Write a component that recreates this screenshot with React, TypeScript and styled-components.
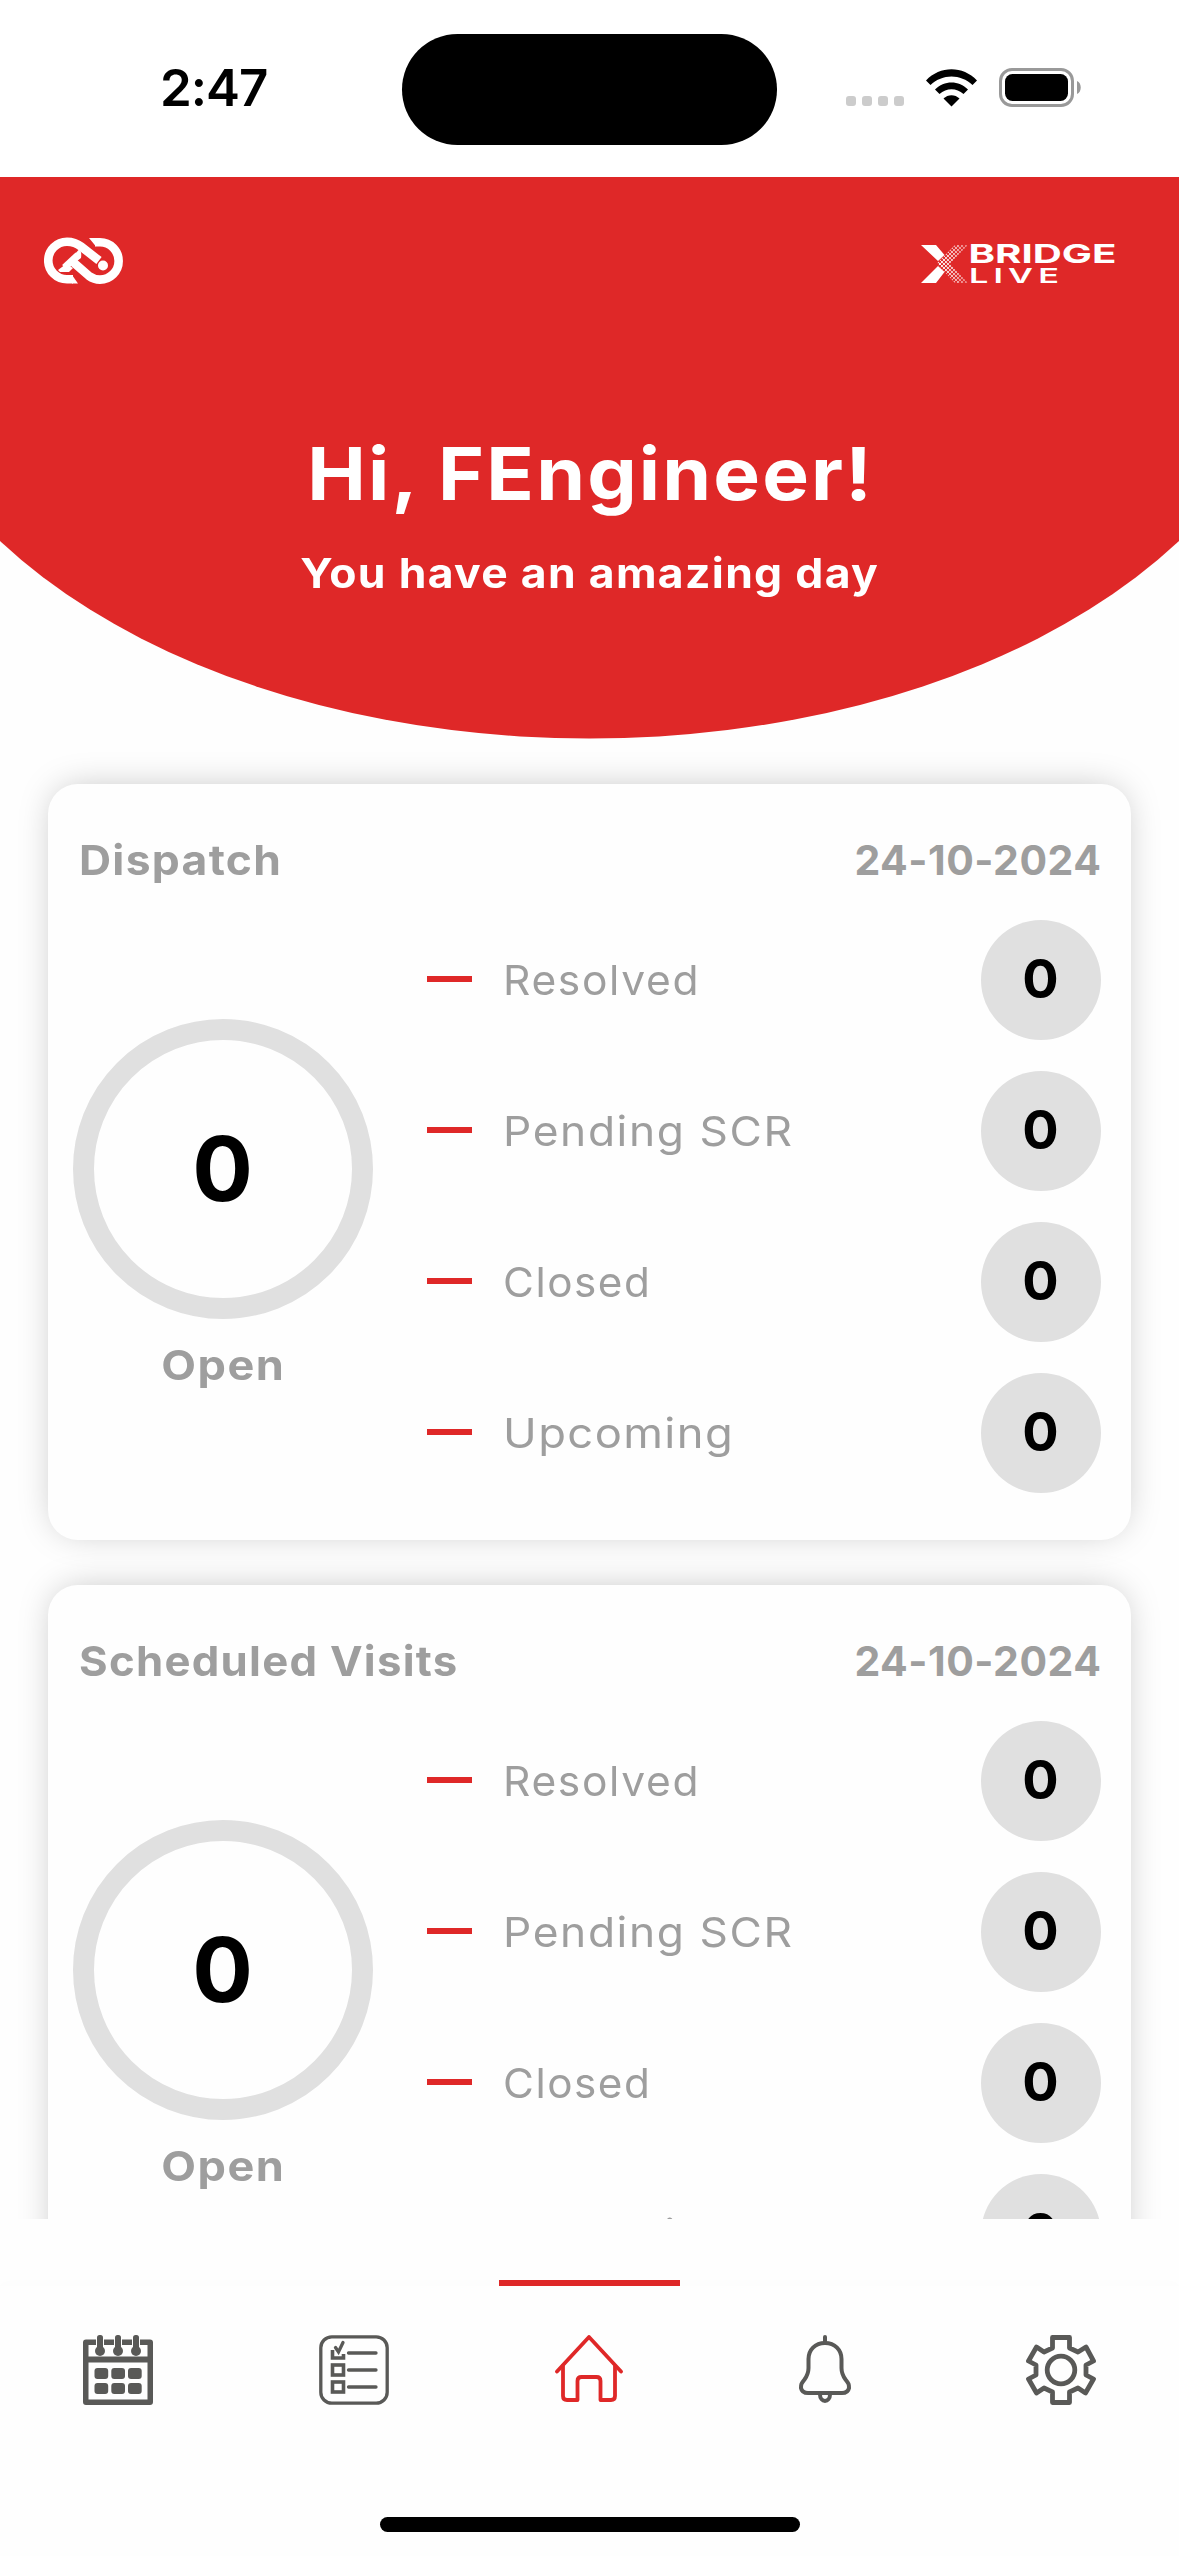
import React from 'react';
import styled, { createGlobalStyle } from 'styled-components';

const RED = '#df2828';
const GREY = '#9e9e9e';
const SILVER = '#e0e0e0';
const ICON = '#595957';

const GlobalStyle = createGlobalStyle`
  html, body { margin: 0; padding: 0; background: #fefefe; }
  body { width: 1179px; height: 2556px; overflow: hidden; }
  * { box-sizing: border-box; }
`;

const Screen = styled.div`
  width: 1179px;
  height: 2556px;
  overflow: hidden;
  display: flex;
  flex-direction: column;
  background: #fefefe;
  font-family: Inter, 'Open Sans', sans-serif;
`;

const StatusBar = styled.div`
  height: 177px;
  flex: none;
  display: flex;
  align-items: flex-start;
  background: #fff;
`;

const Clock = styled.div`
  width: 402px;
  padding: 57px 0 0 160px;
  font-size: 51px;
  line-height: 62px;
  font-weight: 600;
  letter-spacing: -1px;
  color: #000;
`;

const Island = styled.div`
  width: 375px;
  height: 111px;
  margin-top: 33.5px;
  border-radius: 56px;
  background: #000;
`;

const StatusIcons = styled.div`
  display: flex;
  align-items: flex-end;
  margin: 68px 0 0 69px;
  height: 39px;
`;

const Header = styled.header`
  height: 562px;
  flex: none;
  overflow: hidden;
  display: flex;
  flex-direction: column;
  align-items: center;
  background: ${RED};
  clip-path: ellipse(707px 441px at 50% 120.5px);
  color: #fff;
`;

const Logos = styled.div`
  width: 100%;
  height: 130px;
  flex: none;
  display: flex;
  justify-content: space-between;
  align-items: flex-start;
  padding: 60px 62px 0 44px;
`;

const Greeting = styled.h1`
  margin: 123px 0 0;
  font-size: 73px;
  line-height: 88px;
  font-weight: 700;
  letter-spacing: 2px;
  margin-right: -2px;
  transform: scaleX(1.075);
`;

const Subtitle = styled.p`
  margin: 30px 0 0;
  font-size: 41px;
  line-height: 50px;
  font-weight: 650;
  letter-spacing: 1.2px;
  transform: scaleX(1.085);
`;

const Feed = styled.main`
  height: 1480px;
  flex: none;
  overflow: hidden;
  display: flex;
  flex-direction: column;
  gap: 45px;
  padding: 45px 48px 0;
`;

const Card = styled.section`
  height: 756px;
  flex: none;
  border-radius: 30px;
  background: #fefefe;
  box-shadow: 0 -2px 36px -8px rgba(0, 0, 0, 0.27);
`;

const CardHead = styled.div`
  display: flex;
  justify-content: space-between;
  padding: 51px 30px 0 31px;
  height: 136px;
  font-size: 41px;
  line-height: 50px;
  font-weight: 700;
  color: ${GREY};
`;

const Wide = styled.span<{ $track: number; $stretch?: number; $origin?: string }>`
  display: inline-block;
  letter-spacing: ${(p) => p.$track}px;
  margin-right: ${(p) => -p.$track}px;
  transform: scaleX(${(p) => p.$stretch ?? 1});
  transform-origin: ${(p) => p.$origin ?? 'left'} center;
`;

const CardBody = styled.div`
  display: flex;
`;

const Summary = styled.div`
  width: 300px;
  margin-left: 24.5px;
  padding-top: 99px;
  display: flex;
  flex-direction: column;
  align-items: center;
`;

const Ring = styled.div`
  width: 300px;
  height: 300px;
  border-radius: 50%;
  border: 21px solid ${SILVER};
  display: flex;
  align-items: center;
  justify-content: center;
  padding-bottom: 1px;
  font-size: 90px;
  font-weight: 700;
  color: #000;
`;

const RingLabel = styled.div`
  margin-top: 21px;
  font-size: 41px;
  line-height: 50px;
  font-weight: 700;
  color: ${GREY};
`;

const Rows = styled.div`
  display: flex;
  flex-direction: column;
  gap: 31px;
  margin-left: 54.5px;
  width: 673.5px;
`;

const Row = styled.div`
  height: 120px;
  display: flex;
  align-items: center;
`;

const Dash = styled.span`
  width: 45px;
  height: 6px;
  margin: 0 31px 2px 0;
  background: ${RED};
`;

const RowLabel = styled.span`
  flex: 1;
  font-size: 41px;
  line-height: 50px;
  font-weight: 430;
  color: ${GREY};
`;

const Badge = styled.span`
  width: 120px;
  height: 120px;
  border-radius: 50%;
  background: ${SILVER};
  display: flex;
  align-items: center;
  justify-content: center;
  padding-bottom: 3px;
  font-size: 54px;
  font-weight: 700;
  color: #000;
`;

const BottomArea = styled.footer`
  flex: 1;
  display: flex;
  flex-direction: column;
  align-items: center;
  padding-top: 61px;
`;

const Indicator = styled.div`
  width: 181px;
  height: 6px;
  background: ${RED};
`;

const TabBar = styled.nav`
  width: 100%;
  height: 231px;
  display: grid;
  grid-template-columns: repeat(5, 1fr);
  justify-items: center;
  padding-top: 49px;
  background: #fefefe;
  box-shadow: 0 -3px 12px rgba(0, 0, 0, 0.012);
`;

const HomeBar = styled.div`
  width: 420px;
  height: 15px;
  border-radius: 8px;
  background: #000;
`;

const WifiSvg = styled.svg`
  margin-left: 18px;
`;

const BatterySvg = styled.svg`
  margin-left: 22px;
`;

const LogoSvg = styled.svg`
  overflow: visible;
`;

const Signal = () => (
  <svg width="62" height="39" viewBox="0 0 62 39">
    {[0, 16, 32, 48].map((x) => (
      <rect key={x} x={x} y="28" width="10" height="10" rx="3" fill="#ccc" />
    ))}
  </svg>
);

const Wifi = () => (
  <WifiSvg width="51" height="38" viewBox="0 0 51 38">
    <path d="M0 11.5C14 -3.5 37 -3.5 51 11.5L46.5 16C34.5 4.5 16.5 4.5 4.5 16Z" />
    <path d="M9 20.5C18 11 33 11 42 20.5L37.5 25C30.5 18.5 20.5 18.5 13.5 25Z" />
    <path d="M17.5 29.5C22 25 29 25 33.5 29.5L25.5 37.5Z" />
  </WifiSvg>
);

const Battery = () => (
  <BatterySvg width="83" height="39" viewBox="0 0 83 39">
    <rect x="1.5" y="1.5" width="72" height="36" rx="11.5" fill="none" stroke="#999" strokeWidth="3" />
    <rect x="6" y="6" width="63" height="27" rx="7.5" />
    <path d="M78 13C83 15 83 24 78 26Z" fill="#999" />
  </BatterySvg>
);

const BrandMark = () => (
  <svg width="80" height="48" viewBox="0 0 80 48" fill="none" stroke="#fff" strokeWidth="8.6">
    <path d="M29 42.300H23A18.750 18.750 0 0 1 23 4.800Q31 4.800 37 9.500L55 23.500" />
    <path d="M51 5.300H56A18.650 18.650 0 0 1 56 42.600Q50 42.600 45 39L29 25" />
    <path d="M20.500 30.500L34 18" strokeWidth="7" />
    <path d="M14 33L22 27L29 31L25 35H16Z M29 19L35 12.500Q38 14 37 21L33 24Z" fill="#fff" stroke="none" />
    <circle cx="59" cy="28.500" r="5" fill="#fff" stroke="none" />
    <path d="M28 38L34 46.600H28Z M52 9.600L45 1H52Z" fill="#fff" stroke="none" />
  </svg>
);

const BridgeLogo = () => (
  <LogoSvg width="196" height="50" viewBox="0 0 196 50" fill="#fff">
    <defs>
      <pattern id="dots" width="4" height="4" patternUnits="userSpaceOnUse">
        <circle cx="1" cy="1" r="1.15" />
        <circle cx="3" cy="3" r="1.15" />
      </pattern>
      <linearGradient id="fade" x1="0" x2="1">
        <stop offset="0.3" stopColor="#fff" />
        <stop offset="0.85" stopColor="#fff" stopOpacity="0.3" />
      </linearGradient>
      <mask id="fadeMask">
        <rect width="60" height="50" fill="url(#fade)" />
      </mask>
    </defs>
    <path d="M0 8H15L23.500 18L17 24Z M17 29L23.500 35L15 46H0Z" />
    <path d="M16 26.500L34 8H47L29 26.500L47 46H34Z" fill="url(#dots)" mask="url(#fadeMask)" />
    <text x="47.500" y="26" fontFamily="Inter, sans-serif" fontSize="26" fontWeight="700" textLength="148" lengthAdjust="spacingAndGlyphs">BRIDGE</text>
    <text x="48" y="46" fontFamily="Inter, sans-serif" fontSize="20" fontWeight="600" letterSpacing="3" textLength="95" lengthAdjust="spacingAndGlyphs">LIVE</text>
  </LogoSvg>
);

const CalendarIcon = () => (
  <svg width="70" height="70" viewBox="0 0 70 70" fill={ICON}>
    <path fillRule="evenodd" d="M3 4.5H67Q70 4.5 70 7.5V67Q70 70 67 70H3Q0 70 0 67V7.5Q0 4.5 3 4.5ZM5.5 10V21.5H64.500V10ZM5.5 27.5V64.500H64.500V27.5Z" />
    {[17, 35, 53].map((x) => (
      <g key={x}>
        <rect x={x - 4} y="0" width="8" height="15" fill="#fefefe" />
        <rect x={x - 3} y="0" width="6" height="14" rx="2.500" />
        <circle cx={x} cy="16" r="5" />
      </g>
    ))}
    {[11.5, 28.3, 45].map((x) =>
      [33, 48].map((y) => <rect key={`${x}-${y}`} x={x} y={y} width="13.700" height="11" rx="3" />)
    )}
  </svg>
);

const ChecklistIcon = () => (
  <svg width="70" height="70" viewBox="0 0 70 70" fill="none" stroke={ICON} strokeWidth="3.300">
    <rect x="1.800" y="1.800" width="66.400" height="66.400" rx="11" />
    <path d="M13.500 15V23H24.500V19" strokeWidth="3.600" />
    <path d="M16.500 12.500L19.500 17L24 7.500" strokeLinecap="round" />
    <rect x="13.500" y="30" width="11" height="10" strokeWidth="3.600" />
    <rect x="13.500" y="47" width="11" height="10" strokeWidth="3.600" />
    <path d="M29.500 18H57M29.500 35H57M29.500 52H57" strokeLinecap="round" />
  </svg>
);

const HomeIcon = () => (
  <svg width="70" height="70" viewBox="0 0 70 70" fill="none" stroke={RED} strokeWidth="3.800" strokeLinecap="round" strokeLinejoin="round">
    <path d="M3 36.500L35 2L67 36.500" />
    <path d="M9 31V61Q9 65 13 65H23.500V46Q23.500 42 27.500 42H42.500Q46.500 42 46.500 46V65H57Q61 65 61 61V31" />
  </svg>
);

const BellIcon = () => (
  <svg width="70" height="70" viewBox="0 0 70 70" fill="none" stroke={ICON} strokeWidth="4" strokeLinecap="round">
    <path d="M35 2V7" />
    <path d="M35 8C25 8 18.500 15 18.500 24V33Q18.500 39 14.500 44.500C11 49 11 49 11 53Q12 58 18 58H52Q58 58 59 53C59 49 59 49 55.500 44.500Q51.500 39 51.500 33V24C51.500 15 45 8 35 8Z" />
    <path d="M30 59.500C30 68 40 68 40 59.500" />
  </svg>
);

const GearIcon = () => (
  <svg width="70" height="70" viewBox="0 0 70 70" fill="none" stroke={ICON} strokeWidth="4.800" strokeLinejoin="round">
    <path d="M26.500 2.500H43.500V13L52 17L60 12L67.500 26L60 30V40L67.500 44L59.500 58L52 53L43.500 57V67.500H26.500V57L18 53L10.500 58L2.500 44L10 40V30L2.500 26L10.500 12L18 17L26.500 13Z" />
    <circle cx="35" cy="35" r="13.800" />
  </svg>
);

type RowData = { label: string; track: number; stretch: number };

const rows: RowData[] = [
  { label: 'Resolved', track: 1.6, stretch: 1.037 },
  { label: 'Pending SCR', track: 1.5, stretch: 1.08 },
  { label: 'Closed', track: 1.5, stretch: 1.03 },
  { label: 'Upcoming', track: 1.3, stretch: 1.105 },
];

const StatCard = ({ title, stretch }: { title: string; stretch: number }) => (
  <Card>
    <CardHead>
      <Wide $track={1.2} $stretch={stretch}>{title}</Wide>
      <Wide $track={0.5} $origin="right">24-10-2024</Wide>
    </CardHead>
    <CardBody>
      <Summary>
        <Ring>0</Ring>
        <RingLabel>
          <Wide $track={1.3} $stretch={1.1} $origin="center">Open</Wide>
        </RingLabel>
      </Summary>
      <Rows>
        {rows.map((r) => (
          <Row key={r.label}>
            <Dash />
            <RowLabel>
              <Wide $track={r.track} $stretch={r.stretch}>{r.label}</Wide>
            </RowLabel>
            <Badge>0</Badge>
          </Row>
        ))}
      </Rows>
    </CardBody>
  </Card>
);

export default function App() {
  return (
    <Screen>
      <GlobalStyle />
      <StatusBar>
        <Clock>2:47</Clock>
        <Island />
        <StatusIcons>
          <Signal />
          <Wifi />
          <Battery />
        </StatusIcons>
      </StatusBar>
      <Header>
        <Logos>
          <BrandMark />
          <BridgeLogo />
        </Logos>
        <Greeting>Hi, FEngineer!</Greeting>
        <Subtitle>You have an amazing day</Subtitle>
      </Header>
      <Feed>
        <StatCard title="Dispatch" stretch={1.083} />
        <StatCard title="Scheduled Visits" stretch={1.066} />
      </Feed>
      <BottomArea>
        <Indicator />
        <TabBar>
          <CalendarIcon />
          <ChecklistIcon />
          <HomeIcon />
          <BellIcon />
          <GearIcon />
        </TabBar>
        <HomeBar />
      </BottomArea>
    </Screen>
  );
}
